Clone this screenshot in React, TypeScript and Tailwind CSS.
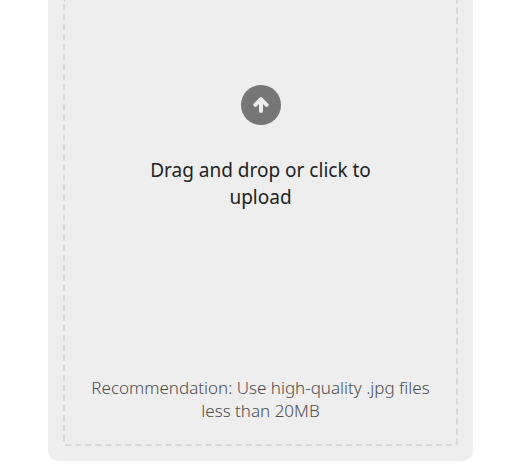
export default function App() {
  return (
    <main className="min-h-screen bg-white pr-[50px] pl-12 font-['Noto_Sans','Open_Sans',sans-serif]">
      <section className="rounded-b-[10px] bg-[#eeeeee] px-[15px] pb-[15px]">
        <label
          htmlFor="upload"
          className="flex cursor-pointer flex-col items-center rounded-b border-2 border-t-0 border-dashed border-[#d8d8d8] px-5 pt-[85px] pb-[22px] text-center"
        >
          <input id="upload" type="file" accept=".jpg" className="sr-only" />
          <svg className="size-10" viewBox="0 0 40 40" fill="none" aria-hidden="true">
            <circle cx="20" cy="20" r="20" fill="#767676" />
            <path
              d="M20 26V15M14.4 19.8L20 14.2l5.6 5.6"
              stroke="#eeeeee"
              strokeWidth="4"
              strokeLinecap="round"
              strokeLinejoin="round"
            />
          </svg>
          <span className="mt-8 w-60 text-[19px] leading-[27px] text-[#222222]">
            Drag and drop or click to upload
          </span>
          <span className="mt-[165px] text-[17px] leading-[23px] font-light text-[#4d4d4d]">
            Recommendation: Use high-quality .jpg files less than 20MB
          </span>
        </label>
      </section>
    </main>
  );
}
